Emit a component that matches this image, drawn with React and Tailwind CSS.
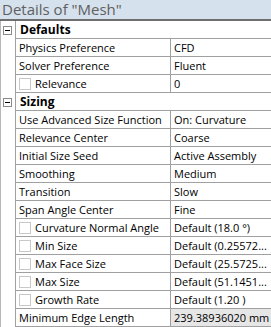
import React from "react";

const rows = [
  { group: "Defaults" },
  { name: "Physics Preference", value: "CFD" },
  { name: "Solver Preference", value: "Fluent" },
  { name: "Relevance", value: "0", check: true },
  { group: "Sizing" },
  { name: "Use Advanced Size Function", value: "On: Curvature" },
  { name: "Relevance Center", value: "Coarse" },
  { name: "Initial Size Seed", value: "Active Assembly" },
  { name: "Smoothing", value: "Medium" },
  { name: "Transition", value: "Slow" },
  { name: "Span Angle Center", value: "Fine" },
  { name: "Curvature Normal Angle", value: "Default (18.0 °)", check: true },
  { name: "Min Size", value: "Default (0.25572...", check: true },
  { name: "Max Face Size", value: "Default (25.5725...", check: true },
  { name: "Max Size", value: "Default (51.1451...", check: true },
  { name: "Growth Rate", value: "Default (1.20 )", check: true },
  { name: "Minimum Edge Length", value: "239.38936020 mm", readonly: true },
];

function Minus() {
  return (
    <div className="w-[9px] h-[9px] border border-[#8a8a8a] bg-white flex items-center justify-center">
      <div className="w-[5px] h-px bg-black" />
    </div>
  );
}

export default function App() {
  return (
    <div
      className="w-[271px] h-[327px] overflow-hidden bg-white text-[11px] text-black"
      style={{ fontFamily: '"Open Sans", "Noto Sans", sans-serif' }}
    >
      {/* title */}
      <div className="h-[21px] bg-[#d5e1ed] border-b-2 border-[#6e6e6e] pl-[2px] text-[15px] leading-[19px] text-[#606060]">
        Details of "Mesh"
      </div>

      {rows.map((r, i) => (
        <div key={i} className="flex h-[18px]">
          <div className="w-[16px] shrink-0 border-r border-[#a0a0a0] border-l border-l-[#b8b8b8] flex items-center pl-[2px]">
            {r.group && <Minus />}
          </div>
          {r.group ? (
            <div className="flex-1 border-b border-[#a0a0a0] pl-[4px] font-bold text-[12px] leading-[17px]">
              {r.group}
            </div>
          ) : (
            <div className="flex flex-1 border-b border-[#a0a0a0]">
              <div className="w-[155px] shrink-0 border-r border-[#a0a0a0] flex items-center pl-[3px] whitespace-nowrap overflow-hidden">
                {r.check && (
                  <div className="w-[12px] h-[12px] border border-[#c8c8c8] bg-white mr-[4px] shrink-0" />
                )}
                <span className="leading-[17px]">{r.name}</span>
              </div>
              <div
                className={`flex-1 pl-[3px] leading-[17px] whitespace-nowrap overflow-hidden ${
                  r.readonly ? "bg-[#e6e6e6]" : ""
                }`}
              >
                {r.value}
              </div>
            </div>
          )}
        </div>
      ))}
    </div>
  );
}
